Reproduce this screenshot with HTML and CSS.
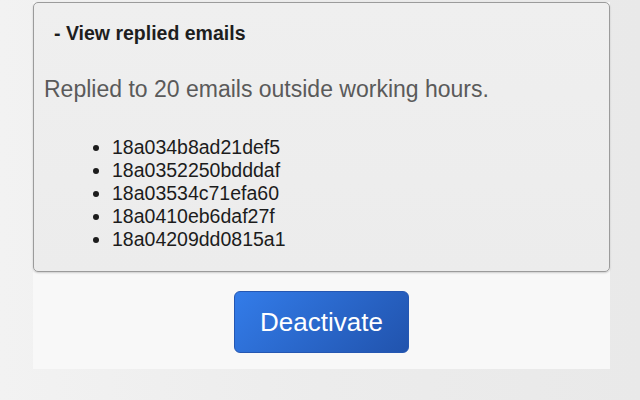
FILE: index.html
```html
<!DOCTYPE html>
<html lang="en">
<head>
    <meta charset="UTF-8">
    <meta name="viewport" content="width=device-width, initial-scale=1.0">
    <title>Working Hours Auto-Reply</title>
    <link rel="stylesheet" href="styles.css">
</head>
<body>

    <div class="panel">
        <!-- Replied emails log -->
        <details class="replied" open>
            <summary>- View replied emails</summary>
            <p class="summary-text">Replied to 20 emails outside working hours.</p>
            <ul class="email-list">
                <li>18a034b8ad21def5</li>
                <li>18a0352250bdddaf</li>
                <li>18a03534c71efa60</li>
                <li>18a0410eb6daf27f</li>
                <li>18a04209dd0815a1</li>
            </ul>
        </details>

        <div class="actions">
            <button class="deactivate">Deactivate</button>
        </div>
    </div>

</body>
</html>
```

FILE: styles.css
```css
body {
    margin: 0;
    font-family: "Liberation Sans", Arial, sans-serif;
    background: linear-gradient(90deg, #f2f2f2, #ececec 50%, #e9e9e9);
    height: 400px;
}

.panel {
    width: 577px;
    margin: 0 30px 0 33px;
    background-color: #f8f8f8;
}

.replied {
    margin-top: 2px;
    padding: 0 10px 20px 10px;
    background: linear-gradient(180deg, #efefef, #ececec);
    border: 1px solid #9b9b9b;
    border-radius: 5px;
    box-shadow: 0 1px 2px rgba(0, 0, 0, 0.18);
}

.replied summary {
    list-style: none;
    padding: 19px 0 0 10px;
    font-size: 19.5px;
    font-weight: bold;
    color: #1e1e1e;
    cursor: pointer;
}

.replied summary::-webkit-details-marker {
    display: none;
}

.summary-text {
    margin: 31px 0 0 0;
    font-size: 23px;
    color: #5a5a5a;
}

.email-list {
    margin: 33px 0 0 0;
    padding-left: 68px;
    font-size: 19.5px;
    color: #1c1c1c;
}

.actions {
    padding: 19px 0 16px;
    text-align: center;
}

.deactivate {
    width: 175px;
    height: 62px;
    font-family: inherit;
    font-size: 26px;
    color: #fff;
    background: linear-gradient(135deg, #337ce9, #2153ad);
    border: 1px solid #2557b2;
    border-radius: 6px;
    cursor: pointer;
}

.deactivate:hover {
    background: linear-gradient(135deg, #2a6fd6, #1b4797);
}
```
